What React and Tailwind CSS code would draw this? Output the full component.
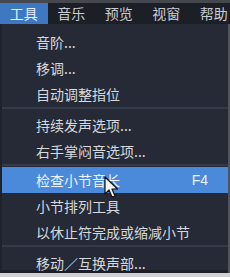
import React from 'react';

const menuBar = ['工具', '音乐', '预览', '视窗', '帮助'];

const groups = [
  [{ label: '音阶...' }, { label: '移调...' }, { label: '自动调整指位' }],
  [{ label: '持续发声选项...' }, { label: '右手掌闷音选项...' }],
  [
    { label: '检查小节音长', key: 'F4', active: true },
    { label: '小节排列工具' },
    { label: '以休止符完成或缩减小节' },
  ],
  [{ label: '移动／互换声部...' }],
];

const Cursor = () => (
  <svg className="absolute left-[104px] top-[176px]" width="15" height="23" viewBox="0 0 15 23">
    <path
      d="M1 1 L1 18 L5 14 L8 21 L11 20 L8 13 L13.5 13 Z"
      fill="#f4f4f4"
      stroke="#111"
      strokeWidth="1.2"
      strokeLinejoin="round"
    />
  </svg>
);

export default function App() {
  return (
    <div className="relative w-[230px] h-[277px] overflow-hidden bg-[#cfd0d2] font-['Noto_Sans_CJK_SC',sans-serif]">
      <div className="h-[3px] bg-[#45484f]" />
      <div className="flex h-[21px] bg-[#1c1f26] text-[14px] leading-[20px] text-[#c9ccd2]">
        {menuBar.map((m, i) => (
          <div
            key={m}
            className={`w-[47.5px] shrink-0 text-center ${i === 0 ? 'bg-[#3f78c2] text-[#e6eefa]' : ''}`}
          >
            {m}
          </div>
        ))}
      </div>
      <div className="flex h-[249px]">
        <div className="w-[228px] bg-[#262a37] border-l-2 border-[#1f222c] border-b-[3px] border-b-[#1c1f27] pt-[5px]">
          {groups.map((g, gi) => (
            <div key={gi}>
              {gi > 0 && <div className={`h-[2px] bg-[#353a48] ${gi === 2 ? 'mb-[1px]' : 'mb-[3px]'}`} />}
              {g.map((it) => (
                <div
                  key={it.label}
                  className={`flex items-center h-[26px] pl-[34px] pr-[20px] text-[14px] ${
                    it.active ? 'bg-[#4b89da] text-[#eef3fb]' : 'text-[#d6d8dc]'
                  }`}
                >
                  <span className="flex-1 whitespace-nowrap">{it.label}</span>
                  {it.key && <span className="font-['Liberation_Sans',sans-serif] text-[14px]">{it.key}</span>}
                </div>
              ))}
            </div>
          ))}
        </div>
        <div className="flex-1 bg-[#50535a]" />
      </div>
      <Cursor />
    </div>
  );
}
